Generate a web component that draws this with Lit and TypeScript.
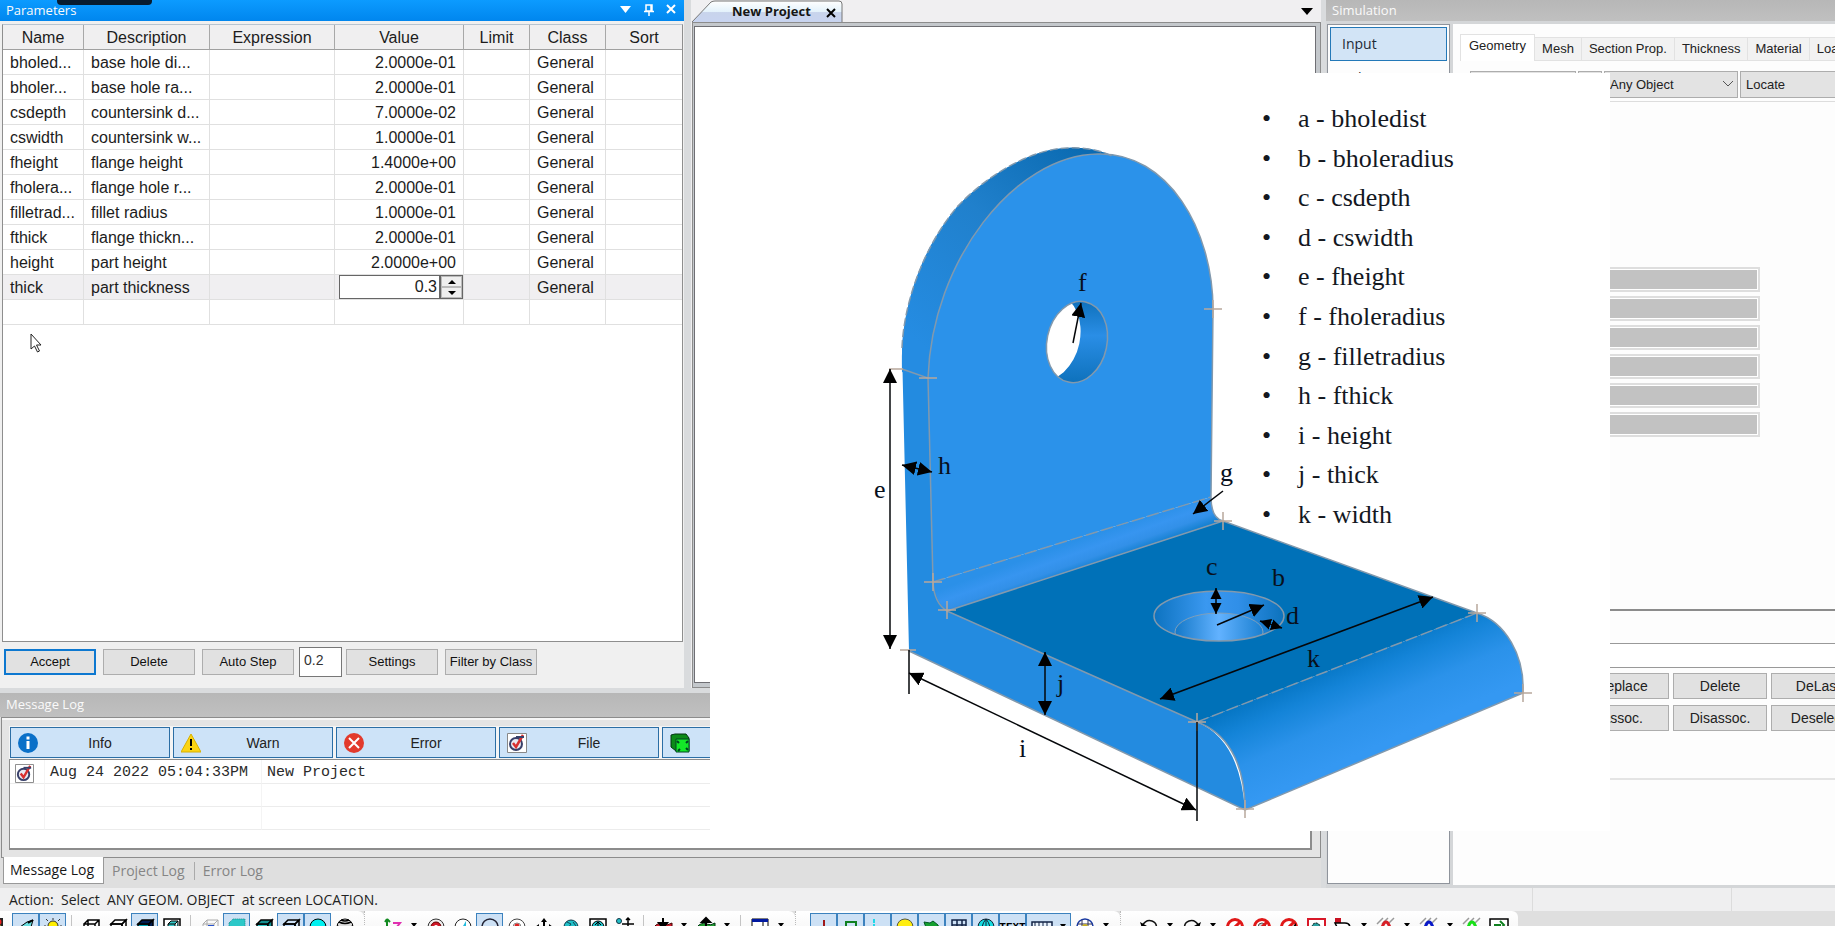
import { LitElement, html, css, svg, nothing } from "lit";
import { customElement, property } from "lit/decorators.js";
import { classMap } from "lit/directives/class-map.js";

const parameters = [
  ["bholed...", "base hole di...", "2.0000e-01"],
  ["bholer...", "base hole ra...", "2.0000e-01"],
  ["csdepth", "countersink d...", "7.0000e-02"],
  ["cswidth", "countersink w...", "1.0000e-01"],
  ["fheight", "flange height", "1.4000e+00"],
  ["fholera...", "flange hole r...", "2.0000e-01"],
  ["filletrad...", "fillet radius", "1.0000e-01"],
  ["fthick", "flange thickn...", "2.0000e-01"],
  ["height", "part height", "2.0000e+00"],
];

const legend = [
  "a - bholedist", "b - bholeradius", "c - csdepth", "d - cswidth", "e - fheight", "f - fholeradius",
  "g - filletradius", "h - fthick", "i - height", "j - thick", "k - width",
];

const cube = (front: string, side: string) => svg`
  <path d="M2 6h11v11H2z" fill=${front} stroke="#000" stroke-width="1.5"/>
  <path d="M2 6l4-4h11l-4 4z" fill=${side} stroke="#000" stroke-width="1.5"/>
  <path d="M17 2v11l-4 4V6z" fill=${side} stroke="#000" stroke-width="1.5"/>`;
const noEntry = (extra: unknown) => svg`
  <circle cx="9" cy="9" r="7.5" fill="#fff" stroke="#e01818" stroke-width="3"/>${extra}
  <path d="M4 14L14 4" stroke="#e01818" stroke-width="3"/>`;
const curve = (color: string) => svg`
  <path d="M0 6l6-6M5 6l6-6M12 5l5-5" stroke="#9a9a9a" stroke-width="1.5"/>
  <path d="M1 14c5-1 4-10 8-10s3 9 8 10" fill="none" stroke=${color} stroke-width="3"/>`;

const glyphs: Record<string, unknown> = {
  traffic: svg`<path d="M4 0h9v18H4z" fill="#222"/><circle cx="8.500" cy="4" r="3" fill="#e22"/><circle cx="8.500" cy="10" r="3" fill="#fd2"/>`,
  plane: svg`<path d="M3 9l7-5 6-2-2 7-4 5z" fill="#6adfe0" stroke="#000"/><path d="M0 9h9M11 5l5-3" stroke="#000" stroke-width="2"/>`,
  bulb: svg`<circle cx="9" cy="8" r="5" fill="#ffee00" stroke="#333"/><path d="M9 0v2M2 1l2 2M16 1l-2 2M0 8h2M16 8h2M6 13h6v4H6z" stroke="#333" fill="#999"/>`,
  wire: svg`<path d="M2 6h11v11H2zM6 2h11v11H6zM2 6l4-4M13 6l4-4M2 17l4-4M13 17l4-4" fill="none" stroke="#000" stroke-width="1.500"/>`,
  hollow: cube("none", "none"),
  dark: cube("#00a6b8", "#001c50"),
  nested: svg`<path d="M1 1h16v16H1z" fill="#fff" stroke="#000" stroke-width="1.500"/><path d="M5 6h7v7H5zM5 6l3-3h7l-3 3M15 3v7l-3 3" fill="#36c8c8" stroke="#000"/>`,
  faded: svg`<path d="M2 6h11v11H2zM6 2h11v11H6zM2 6l4-4M13 6l4-4" fill="none" stroke="#aaa"/><path d="M7 7h6v5H7z" fill="#2854d0"/>`,
  cyan: svg`<path d="M1 5l4-4h12v12l-4 4H1z" fill="#2cc8c8" stroke="#158888" stroke-dasharray="1 1"/>`,
  teal: cube("#2cc8c8", "#149090"),
  blue: cube("#bcd8f8", "none"),
  ball: svg`<circle cx="9" cy="9" r="8" fill="#00f0f0" stroke="#000"/>`,
  globe: svg`<circle cx="9" cy="9" r="8" fill="#ddd" stroke="#000"/><path d="M3 4q6 3 12 0M1 8q8 4 16 0M3 14q6-3 12 0M5 2q4 2 8 0" fill="none" stroke="#000" stroke-width="1.500"/>`,
  zoomz: svg`<path d="M3 1v15M3 1l-2 3M3 1l3 3" stroke="#128a20" stroke-width="2"/><path d="M9 5h7l-7 9h7" fill="none" stroke="#e030b0" stroke-width="2"/>`,
  target: svg`<circle cx="9" cy="9" r="8" fill="#eee" stroke="#333"/><circle cx="9" cy="9" r="5" fill="#d01828" stroke="#600"/><circle cx="9" cy="9" r="2" fill="#fff"/>`,
  dial: svg`<circle cx="9" cy="9" r="8" fill="#fff" stroke="#222"/><path d="M12 3v10l-6 0z" fill="#2bd"/>`,
  ring: svg`<circle cx="9" cy="9" r="8" fill="none" stroke="#223" stroke-width="1.500"/>`,
  dot: svg`<circle cx="9" cy="9" r="8" fill="#fff" stroke="#444"/><circle cx="9" cy="9" r="4" fill="#fff" stroke="#888"/><circle cx="9" cy="8" r="2.500" fill="#d22"/>`,
  move: svg`<path d="M9 0l3 4H6zM0 9l4-3v6zM18 9l-4-3v6zM9 18l3-4H6z"/><path d="M9 2v14M2 9h14" stroke="#000" stroke-width="2"/>`,
  earth: svg`<circle cx="9" cy="9" r="7" fill="#20c0c8" stroke="#134"/><path d="M5 4l4 2-3 4M11 4l3 4-3 3" stroke="#145" fill="none"/>`,
  fit: svg`<path d="M1 1h16v16H1z" fill="#fff" stroke="#000" stroke-width="1.500"/><circle cx="9" cy="9" r="6" fill="#20c0c8" stroke="#000"/><path d="M9 4v9M6 7l3-3 3 3" stroke="#000" fill="none"/>`,
  pan: svg`<circle cx="3" cy="3" r="2.500" fill="#20c0c8" stroke="#134"/><path d="M12 0v12M6 6h12M10 2l2-2 2 2M5 11l3 3" stroke="#000" stroke-width="1.500" fill="none"/>`,
  down: svg`<path d="M0 9q4-5 9-3t9-1v8q-9 5-18 2z" fill="#d41c2c" stroke="#400"/><path d="M9 0v7M5 5h8l-4 5z" stroke="#000" stroke-width="2"/>`,
  up: svg`<path d="M0 9q4-5 9-3t9-1v8q-9 5-18 2z" fill="#1fa030" stroke="#031"/><path d="M9 10V3M5 4h8L9 0z" stroke="#000" stroke-width="2"/>`,
  win: svg`<path d="M1 1h16v16H1z" fill="#fff" stroke="#000"/><path d="M1 1h16v3H1z" fill="#0018a0"/><path d="M12 4v13" stroke="#000"/>`,
  plus: svg`<path d="M9 2v16M1 9h16" stroke="#a01818" stroke-width="2"/>`,
  square: svg`<path d="M4 4h10v12H4z" fill="none" stroke="#108020" stroke-width="2"/>`,
  corner: svg`<path d="M5 1v14h12" fill="none" stroke="#20d8e8" stroke-width="2" stroke-dasharray="4 1"/>`,
  yellow: svg`<circle cx="9" cy="9" r="8" fill="#ffee10" stroke="#554"/>`,
  terrain: svg`<path d="M1 4l6 1 3-2 5 4 2 8-8-2-4 2z" fill="#15a030" stroke="#052"/>`,
  grid: svg`<path d="M2 2h14v14H2zM2 7h14M2 12h14M7 2v14M12 2v14" fill="none" stroke="#124" stroke-width="1.500"/>`,
  beach: svg`<circle cx="9" cy="9" r="8" fill="#16dbe0" stroke="#123"/><path d="M9 1v16M1 9h16M9 1q-6 7-3 15M9 1q6 7 3 15" fill="none" stroke="#123"/>`,
  ruler: svg`<path d="M0 4h20v9H0z" fill="#e8f2fc" stroke="#124" stroke-width="1.500"/><path d="M3 4v4M7 4v4M11 4v4M15 4v4" stroke="#124"/>`,
  web: svg`<circle cx="9" cy="9" r="8" fill="#fff" stroke="#1838a0" stroke-width="1.500"/><path d="M2 6h14M2 12h14M6 2v14M12 2v14" stroke="#335" /><circle cx="9" cy="9" r="3" fill="#c8b020"/>`,
  undo: svg`<path d="M2 8q4-7 10-5t4 10" fill="none" stroke="#111" stroke-width="1.500"/><path d="M0 4l2 6 5-2z"/>`,
  redo: svg`<path d="M16 8q-4-7-10-5t-4 10" fill="none" stroke="#111" stroke-width="1.500"/><path d="M18 4l-2 6-5-2z"/>`,
  no1: noEntry(nothing),
  no2: noEntry(svg`<circle cx="9" cy="9" r="4" fill="#ccc" stroke="#555"/>`),
  no3: noEntry(svg`<path d="M8 14L16 5v9z"/>`),
  frame: svg`<path d="M1 1h17v16H1z" fill="#fff" stroke="#d81828" stroke-width="2"/><circle cx="9" cy="9" r="4" fill="#28a0a0" stroke="#000" stroke-dasharray="2 1"/>`,
  hand: svg`<path d="M1 0h6v5H1z" fill="#c81020"/><path d="M1 5h10q5 0 5 5t-5 5H6z" fill="#fff" stroke="#000" stroke-width="1.500"/>`,
  cred: curve("#d82028"),
  cblue: curve("#0818c8"),
  cgreen: curve("#18e018"),
  exit: svg`<path d="M0 1h18v16H0z" fill="#fff" stroke="#000" stroke-width="1.500"/><path d="M5 13V7h6M10 3l4 4-4 4" fill="none" stroke="#108020" stroke-width="2"/>`,
};

const groupA = ["traffic", "*plane", "*bulb", "|", "wire", "hollow", "*dark", "nested", "|", "faded", "*cyan", "teal", "*blue", "*ball", "globe"];
const groupB = ["zoomz", "v", "target", "dial", "*ring", "dot", "move", "earth", "fit", "pan", "|", "down", "v", "up", "v", "|", "win", "v"];
const groupC = ["plus", "square", "corner", "yellow", "terrain", "grid", "beach"];
const groupD = ["undo", "v", "redo", "v", "no1", "no2", "no3", "frame", "hand", "v", "cred", "v", "cblue", "v", "cgreen", "exit"];

@customElement("title-bar")
class TitleBar extends LitElement {
  @property() heading = "";
  @property({ type: Boolean }) active = false;

  static styles = css`
    :host { display: block; }
    .bar {
      display: flex; align-items: center; justify-content: space-between; height: 100%; box-sizing: border-box;
      padding: 0 8px 2px 6px; background: linear-gradient(#b7b7b7, #c0c0c0); color: #fafafa;
      font: 13px/18px "Open Sans", "Noto Sans", sans-serif;
    }
    .active { background: linear-gradient(#0c9bff, #0086ee); }
    .tools { display: flex; gap: 12px; }
    button { border: 0; padding: 0; background: none; display: flex; }
  `;

  render() {
    return html`<div class=${classMap({ bar: true, active: this.active })}>
      <span>${this.heading}</span>
      ${this.active ? html`<span class="tools">
        <button aria-label="Menu"><svg width="12" height="10"><path d="M0 2h11L5.500 9z" fill="#fff"/></svg></button>
        <button aria-label="Pin"><svg width="10" height="12"><path d="M2 1h6v6H2zM0 7.500h10M5 7v5M7 1v6" fill="none" stroke="#fff" stroke-width="1.500"/></svg></button>
        <button aria-label="Close"><svg width="10" height="10"><path d="M1 1l8 8M9 1l-8 8" stroke="#fff" stroke-width="2"/></svg></button>
      </span>` : nothing}
    </div>`;
  }
}

@customElement("parameters-panel")
class ParametersPanel extends LitElement {
  static styles = css`
    :host { display: flex; flex-direction: column; min-height: 0; background: #f0f0f0; font: 16px/22px "Liberation Sans", Arial, sans-serif; color: #1c1c1c; }
    title-bar { height: 21px; }
    .sheet { flex: 1; margin: 3px 1px 0 2px; background: #fff; border: 1px solid #8e8e8e; border-top-color: #b8c4d0; overflow: hidden; }
    table { width: 100%; border-collapse: separate; border-spacing: 0; table-layout: fixed; }
    th { font-weight: 400; height: 25px; padding: 2px 0 0; background: #f0eff0; border-right: 1px solid #a8a8a8; border-bottom: 1px solid #a0a0a0; box-sizing: border-box; }
    td { height: 25px; padding: 2px 7px 0; border-right: 1px solid #e0e0e0; border-bottom: 1px solid #e0e0e0; box-sizing: border-box; white-space: nowrap; overflow: hidden; }
    th:last-child, td:last-child { border-right: 0; }
    .num { text-align: right; }
    .edit { padding: 0 0 0 4px; }
    .current td { background: #f0eff1; }
    .stepper { display: flex; height: 24px; box-sizing: border-box; border: 1px solid #666; background: #fff; }
    .stepper input { flex: 1; min-width: 0; border: 0; border-right: 2px solid #666; padding: 0 2px; text-align: right; font: inherit; color: inherit; outline: 0; }
    .arrows { display: flex; flex-direction: column; width: 21px; background: #ececec; }
    .arrows button { flex: 1; display: flex; align-items: center; justify-content: center; padding: 0; border: 1px solid #bbb; background: #efefef; }
    .c1 { width: 81px } .c2 { width: 126px } .c3 { width: 125px } .c4 { width: 129px } .c5 { width: 66px } .c6 { width: 76px }
    .actions { display: flex; align-items: center; gap: 7px; height: 46px; box-sizing: border-box; padding: 3px 4px 9px; }
    .actions button { width: 92px; height: 26px; padding: 0; border: 1px solid #adadad; background: #e1e1e1; font: 13px/20px "Liberation Sans", Arial, sans-serif; color: #111; white-space: nowrap; }
    .actions .default { border: 2px solid #0d78d0; }
    .actions input { width: 43px; height: 30px; margin: 0 -3px 0 -2px; box-sizing: border-box; border: 1px solid #777; background: #fff; padding: 0 4px 5px; font: 14px/20px "Liberation Sans", Arial, sans-serif; color: #333; }
  `;

  render() {
    return html`
      <title-bar heading="Parameters" active></title-bar>
      <div class="sheet">
        <table>
          <colgroup><col class="c1"><col class="c2"><col class="c3"><col class="c4"><col class="c5"><col class="c6"><col></colgroup>
          <thead><tr>${["Name", "Description", "Expression", "Value", "Limit", "Class", "Sort"].map((h) => html`<th>${h}</th>`)}</tr></thead>
          <tbody>
            ${parameters.map(([name, text, value]) => html`<tr>
              <td>${name}</td><td>${text}</td><td></td><td class="num">${value}</td><td></td><td>General</td><td></td>
            </tr>`)}
            <tr class="current">
              <td>thick</td><td>part thickness</td><td></td>
              <td class="edit"><div class="stepper">
                <input aria-label="Value" value="0.3">
                <span class="arrows">
                  <button aria-label="Increase"><svg width="8" height="4"><path d="M0 4h8L4 0z"/></svg></button>
                  <button aria-label="Decrease"><svg width="8" height="4"><path d="M0 0h8L4 4z"/></svg></button>
                </span>
              </div></td>
              <td></td><td>General</td><td></td>
            </tr>
            <tr><td></td><td></td><td></td><td></td><td></td><td></td><td></td></tr>
          </tbody>
        </table>
      </div>
      <div class="actions">
        <button class="default">Accept</button><button>Delete</button><button>Auto Step</button>
        <input aria-label="Step" value="0.2">
        <button>Settings</button><button>Filter by Class</button>
      </div>`;
  }
}

@customElement("project-view")
class ProjectView extends LitElement {
  static styles = css`
    :host { display: flex; flex-direction: column; background: #f0eff1; }
    .strip { display: flex; justify-content: space-between; align-items: center; height: 22px; padding-right: 8px; }
    .tab { position: relative; width: 152px; height: 22px; }
    .tab svg { display: block; }
    .label { position: absolute; inset: 0; display: flex; align-items: center; justify-content: space-between; padding: 0 7px 1px 41px; font: bold 13px/20px "Open Sans", "Noto Sans", sans-serif; color: #161616; }
    .label a { color: inherit; text-decoration: none; white-space: nowrap; }
    button { border: 0; padding: 0; background: none; display: flex; }
    .label button { margin-top: 5px; }
    .canvas { flex: 1; margin: 0 0 0 1px; border: 3px solid #c4c8cc; border-width: 4px 5px 5px 2px; outline: 1px solid #8c8c8c; outline-offset: -1px; background: #fff; box-shadow: inset 0 0 0 1px #6f6f74; }
  `;

  render() {
    return html`
      <div class="strip">
        <div class="tab">
          <svg width="152" height="22">
            <defs><linearGradient id="t" x2="0" y2="1"><stop offset="0" stop-color="#fff"/><stop offset=".5" stop-color="#e4f2fb"/><stop offset=".55" stop-color="#c8d4ec"/><stop offset="1" stop-color="#c8d4f0"/></linearGradient></defs>
            <path d="M1 22L20 2q2-1 4-1h124q3 0 3 3v18" fill="url(#t)" stroke="#777"/>
          </svg>
          <span class="label"><a href="#">New Project</a>
            <button aria-label="Close"><svg width="10" height="10"><path d="M1 1l8 8M9 1l-8 8" stroke="#000" stroke-width="2"/></svg></button></span>
        </div>
        <button aria-label="Tabs"><svg width="12" height="7"><path d="M0 0h12L6 7z"/></svg></button>
      </div>
      <div class="canvas"></div>`;
  }
}

const fileIcon = svg`<path d="M.500.500h19v19H.500z" fill="#fff" stroke="#888"/><circle cx="9" cy="11" r="6" fill="#e8e8f0" stroke="#38406a" stroke-width="2"/><path d="M6 10l3 4 7-12" fill="none" stroke="#d83030" stroke-width="2.500"/><path d="M9 4h8" stroke="#38406a" stroke-width="2"/>`;

@customElement("message-log")
class MessageLog extends LitElement {
  static styles = css`
    :host { display: flex; flex-direction: column; background: #dfdfdf; color: #1a1a1a; }
    title-bar { height: 24px; }
    .body { flex: 1; display: flex; flex-direction: column; margin: 0 0 0 1px; padding: 8px 8px 7px 7px; border: 1px solid #8c8c8c; background: #e4e4e4; box-shadow: inset 0 2px #f6f6f6; }
    .filters { display: flex; gap: 3px; padding: 1px; overflow: hidden; background: #f4f4f4; }
    .filters button { display: flex; align-items: center; width: 160px; height: 31px; flex: none; box-sizing: border-box; border: 1px solid #2b6ea5; background: #cde3f8; padding: 0 7px; font: 14px/20px "Liberation Sans", Arial, sans-serif; color: #222; }
    .filters span { flex: 1; }
    .filters svg { flex: none; }
    .list { flex: 1; border: 1px solid #8c8c8c; border-width: 1px 2px 2px 1px; background: #fff; }
    table { width: 100%; border-spacing: 0; table-layout: fixed; font: 15px/20px "Liberation Mono", monospace; color: #2a2a2a; }
    td { height: 23px; box-sizing: border-box; padding: 3px 5px 0; border-bottom: 1px solid #ececec; white-space: pre; }
    td + td { border-left: 1px solid #f4f4f4; }
    td svg { display: block; }
    .k1 { width: 34px } .k2 { width: 217px }
    .tabs { display: flex; align-items: flex-start; height: 30px; padding-left: 3px; font: 14px/26px "Open Sans", "Noto Sans", sans-serif; }
    .tabs a { color: #858585; text-decoration: none; padding: 0 9px 0 8px; white-space: nowrap; }
    .tabs .on { color: #161616; background: #fff; border: 1px solid #999; border-top: 0; padding: 0 9px 0 6px; margin-top: -1px; }
    .tabs .cut { border-left: 1px solid #aaa; margin: 4px 0; line-height: 18px; }
  `;

  render() {
    const filter = (label: string, icon: unknown) => html`<button aria-label=${label}><svg width="20" height="20">${icon}</svg><span>${label}</span></button>`;
    return html`
      <title-bar heading="Message Log"></title-bar>
      <div class="body">
        <div class="filters">
          ${filter("Info", svg`<circle cx="10" cy="10" r="10" fill="#0a70c8"/><path d="M8.500 8h3v8h-3zM8.500 3.500h3v3h-3z" fill="#fff"/>`)}
          ${filter("Warn", svg`<path d="M10 1l10 18H0z" fill="#fbd414" stroke="#d8b000"/><path d="M9 6h2v7H9zM9 15h2v2H9z"/>`)}
          ${filter("Error", svg`<circle cx="10" cy="10" r="10" fill="#e23a2c"/><path d="M5 5l10 10M15 5L5 15" stroke="#fff" stroke-width="2"/>`)}
          ${filter("File", fileIcon)}
          ${filter("Geom", svg`<path d="M1 2l4-1h11l3 4v13H6l-5-4z" fill="#0b8a18" stroke="#031"/><path d="M6 6h13v13H6z" fill="#14e828" stroke="#042"/><path d="M9 10l-2-2M16 10l2-2M10 16l-2 2M16 15l2 2" stroke="#042" stroke-width="2"/>`)}
        </div>
        <div class="list">
          <table>
            <colgroup><col class="k1"><col class="k2"><col></colgroup>
            <tbody>
              <tr><td><svg width="19" height="19" viewBox="0 0 20 20">${fileIcon}</svg></td><td>Aug 24 2022 05:04:33PM</td><td>New Project</td></tr>
              <tr><td></td><td></td><td></td></tr>
              <tr><td></td><td></td><td></td></tr>
            </tbody>
          </table>
        </div>
      </div>
      <nav class="tabs"><a class="on" href="#">Message Log</a><a href="#">Project Log</a><a class="cut" href="#">Error Log</a></nav>`;
  }
}

@customElement("simulation-panel")
class SimulationPanel extends LitElement {
  static styles = css`
    :host { display: grid; grid-template: 21px minmax(0, 1fr) / 123px minmax(0, 1fr); gap: 3px 3px; padding: 0 0 3px 1px; background: #d4d6d8; font: 13px/20px "Liberation Sans", Arial, sans-serif; color: #222; overflow: hidden; }
    title-bar { grid-column: 1 / -1; margin-left: -1px; }
    .side { border: 1px solid #8f949c; background: #fdfdfd; padding: 2px; margin-bottom: 1px; display: flex; flex-direction: column; }
    .side a { color: #1e2a36; text-decoration: none; padding: 6px 11px; border: 1px solid transparent; font: 14px/20px "Open Sans", "Noto Sans", sans-serif; }
    .side .on { background: #d2e4f6; border: 1px solid #2378b8; }
    .page { display: flex; flex-direction: column; background: #fdfdfd; padding-top: 10px; overflow: hidden; }
    .tabs { display: flex; align-items: flex-end; height: 27px; padding-left: 7px; }
    .tabs button { flex: none; height: 24px; padding: 0 7px; border: 1px solid #e2e2e2; border-left-width: 0; background: #f2f2f2; font: inherit; color: inherit; }
    .tabs .on { height: 27px; padding: 0 8px 4px; background: #fff; border-left-width: 1px; border-bottom: 0; }
    .picks { display: flex; gap: 2px; padding: 10px 0 3px 17px; border-bottom: 1px solid #ddd; }
    .pick { position: relative; flex: none; width: 134px; }
    .pick.s { width: 24px } .pick.m { width: 106px }
    select { appearance: none; width: 100%; height: 27px; box-sizing: border-box; border: 1px solid #adadad; border-radius: 0; background: #e3e3e3; padding: 0 5px; font: inherit; color: inherit; }
    .pick svg { position: absolute; right: 5px; top: 10px; }
    .space { flex: 1; padding: 165px 0 0 137px; display: flex; flex-direction: column; gap: 4px; border-bottom: 2px solid #8c8c8c; overflow: hidden; }
    .space input { width: 170px; height: 25px; flex: none; box-sizing: border-box; border: 2px solid #dedede; outline: 1px solid #fff; outline-offset: -3px; background: #c2c2c2; }
    .entry { margin: 32px -4px 0 0; height: 25px; flex: none; box-sizing: border-box; border: 1px solid #999; background: #fff; }
    .cmds { display: grid; grid-template-columns: repeat(3, 94px); gap: 6px 4px; padding: 5px 0 47px 122px; border-bottom: 2px solid #e4e4e4; margin-bottom: 105px; }
    .cmds button { height: 26px; padding: 0; border: 1px solid #adadad; background: #e1e1e1; font: 14px/20px "Liberation Sans", Arial, sans-serif; color: inherit; }
  `;

  render() {
    const pick = (size: string, label: string) => html`<span class="pick ${size}">
      <select aria-label="Filter"><option>${label}</option></select>
      ${size ? nothing : html`<svg width="10" height="6"><path d="M0 0l5 5 5-5" fill="none" stroke="#555"/></svg>`}</span>`;
    return html`
      <title-bar heading="Simulation"></title-bar>
      <nav class="side"><a class="on" href="#">Input</a><a href="#">Solve</a></nav>
      <div class="page">
        <div class="tabs"><button class="on">Geometry</button>${["Mesh", "Section Prop.", "Thickness", "Material", "Loads"].map((t) => html`<button>${t}</button>`)}</div>
        <div class="picks">${pick("m", "")}${pick("s", "")}${pick("", "Any Object")}${pick("", "Locate")}</div>
        <div class="space">${[1, 2, 3, 4, 5, 6].map((n) => html`<input disabled aria-label="Field ${n}">`)}</div>
        <input class="entry" aria-label="Entry">
        <div class="cmds"><button>Replace</button><button>Delete</button><button>DeLast</button><button>Assoc.</button><button>Disassoc.</button><button>Deselect</button></div>
      </div>`;
  }
}

@customElement("bracket-figure")
class BracketFigure extends LitElement {
  static styles = css`
    :host { display: block; background: #fff; color: #14181f; font: 26px/38px "Liberation Serif", "Times New Roman", serif; }
    .frame { position: relative; width: 100%; height: 100%; }
    svg { display: block; width: 100%; height: 100%; }
    ul { position: absolute; left: 552px; top: 27px; height: 434px; margin: 0; padding: 0; list-style: none; display: flex; flex-direction: column; justify-content: space-between; }
    li { display: flex; white-space: nowrap; }
    li::before { content: "•"; width: 36px; }
    text { fill: #08101c; }
    .edge { fill: none; stroke: #8299ad; stroke-width: 1.5; }
    .dim { fill: none; stroke: #05070a; stroke-width: 1.5; }
    .mark { fill: none; stroke: #b8a89c; stroke-width: 1.5; }
  `;

  render() {
    const arrow = (x1: number, y1: number, x2: number, y2: number, both = true, small = false) => {
      const m = small ? "url(#s)" : "url(#a)";
      return svg`<line class="dim" x1=${x1} y1=${y1} x2=${x2} y2=${y2} marker-end=${m} marker-start=${both ? m : "none"}/>`;
    };
    const labels: [string, number, number][] = [
      ["f", 1078, 291], ["h", 938, 474], ["e", 874, 498], ["g", 1220, 481], ["c", 1206, 575], ["b", 1272, 586],
      ["d", 1286, 624], ["k", 1307, 667], ["j", 1057, 692], ["i", 1019, 757],
    ];
    const marks = [[1213, 309], [933, 582], [947, 610], [1223, 521], [1477, 613], [1523, 693], [1197, 722], [1245, 809]];
    return html`<div class="frame">
      <svg viewBox="710 73 900 758" preserveAspectRatio="xMinYMin meet" role="img" aria-label="Bracket">
        <defs>
          <marker id="a" viewBox="0 0 14 14" refX="14" refY="7" markerWidth="14" markerHeight="14" markerUnits="userSpaceOnUse" orient="auto-start-reverse"><path d="M0 0l14 7L0 14z"/></marker>
          <marker id="s" viewBox="0 0 14 14" refX="14" refY="7" markerWidth="11" markerHeight="12" markerUnits="userSpaceOnUse" orient="auto-start-reverse"><path d="M0 0l14 7L0 14z"/></marker>
          <linearGradient id="rim" gradientUnits="userSpaceOnUse" x1="1080" y1="148" x2="915" y2="340"><stop offset="0" stop-color="#0b6bb2"/><stop offset=".45" stop-color="#2080cc"/><stop offset="1" stop-color="#258ce2"/></linearGradient>
          <linearGradient id="fil" gradientUnits="userSpaceOnUse" x1="1078" y1="540" x2="1088" y2="568"><stop offset="0" stop-color="#2b90e8"/><stop offset=".4" stop-color="#3795f0"/><stop offset=".7" stop-color="#3290e8"/><stop offset="1" stop-color="#1480d0"/></linearGradient>
          <linearGradient id="nose" gradientUnits="userSpaceOnUse" x1="1330" y1="665" x2="1368" y2="750"><stop offset="0" stop-color="#0676c4"/><stop offset=".25" stop-color="#1484d8"/><stop offset=".6" stop-color="#2b92ea"/><stop offset="1" stop-color="#3498f2"/></linearGradient>
          <linearGradient id="bore" x2="0" y2="1"><stop offset="0" stop-color="#0a6cb4"/><stop offset=".45" stop-color="#2a8ee6"/><stop offset="1" stop-color="#0c70ba"/></linearGradient>
          <linearGradient id="sink"><stop offset="0" stop-color="#0d73c0"/><stop offset=".4" stop-color="#3a98f0"/><stop offset=".65" stop-color="#308fe8"/><stop offset="1" stop-color="#0c72bc"/></linearGradient>
          <linearGradient id="well"><stop offset="0" stop-color="#1478c8"/><stop offset=".5" stop-color="#62b2ff"/><stop offset="1" stop-color="#1a7fd0"/></linearGradient>
          <clipPath id="hole"><ellipse cx="1077" cy="342" rx="30" ry="41" transform="rotate(12 1077 342)"/></clipPath>
          <clipPath id="cone"><ellipse cx="1219" cy="616" rx="65" ry="25"/></clipPath>
        </defs>
        <path d="M902 348C904 300 925 245 957 207C985 177 1030 149 1067 148C1085 147 1100 150 1112 156L1000 400L933 582L947 611L1197 722Q1240 740 1245 810L909 651Z" fill="#238be0"/>
        <path d="M902 372C900 300 925 245 957 207C985 177 1030 149 1067 148C1085 147 1100 150 1112 156C1030 155 932 240 928 378Z" fill="url(#rim)"/>
        <path d="M928 378C932 260 1015 155 1098 154C1168 152 1213 230 1213 309L1211 497L933 582Z" fill="#2b92ea"/>
        <path d="M933 582L1211 497Q1211 518 1223 521L947 611Q936 603 933 582Z" fill="url(#fil)"/>
        <path d="M947 611L1223 521L1477 613L1197 722Z" fill="#0071b8"/>
        <path d="M1197 722L1477 613C1505 622 1525 655 1523 693L1245 810C1245 760 1225 732 1197 722Z" fill="url(#nose)"/>
        <g clip-path="url(#hole)"><path d="M1040 295h80v90h-80z" fill="url(#bore)"/><ellipse cx="1048" cy="337" rx="32" ry="44" transform="rotate(12 1048 337)" fill="#fff"/></g>
        <ellipse class="edge" cx="1077" cy="342" rx="30" ry="41" transform="rotate(12 1077 342)"/>
        <ellipse cx="1219" cy="616" rx="65" ry="25" fill="url(#sink)"/>
        <g clip-path="url(#cone)"><ellipse cx="1219" cy="632" rx="44" ry="19" fill="url(#well)" stroke="#7f9fba"/></g>
        <ellipse class="edge" cx="1219" cy="616" rx="65" ry="25"/>
        <path class="edge" d="M902 348C904 300 925 245 957 207C985 177 1030 149 1067 148C1085 147 1100 150 1112 156" stroke-dasharray="8 3"/>
        <path class="edge" d="M928 378C932 260 1015 155 1098 154C1168 152 1213 230 1213 309L1211 497Q1211 518 1223 521L1477 613C1505 622 1525 655 1523 693L1245 810L909 651"/>
        <path class="edge" d="M902 369l26 9L933 582Q934 603 947 611L1197 722C1225 732 1245 760 1245 810M947 611L1223 521"/>
        <path class="edge" d="M933 582L1211 497M1197 722L1477 613" stroke-dasharray="12 4"/>
        ${marks.map(([x, y]) => svg`<path class="mark" d="M${x - 9} ${y}h18M${x} ${y - 9}v18"/>`)}
        <path class="mark" d="M889 369h14M919 378h18M900 650h16"/>
        <path class="dim" d="M909 650v44M1197 722v99"/>
        ${arrow(890, 369, 890, 649)}${arrow(902, 465, 932, 472)}${arrow(1073, 343, 1081, 303, false)}
        ${arrow(1223, 491, 1193, 514, false)}${arrow(1216, 588, 1216, 614, true, true)}${arrow(1217, 625, 1264, 605, false)}
        ${arrow(1260, 621, 1282, 628, true, true)}${arrow(1160, 699, 1433, 597)}${arrow(1045, 652, 1045, 715)}${arrow(909, 673, 1196, 810)}
        ${labels.map(([t, x, y]) => svg`<text x=${x} y=${y}>${t}</text>`)}
      </svg>
      <ul>${legend.map((l) => html`<li>${l}</li>`)}</ul>
    </div>`;
  }
}

@customElement("tool-strip")
class ToolStrip extends LitElement {
  static styles = css`
    :host { display: flex; height: 15px; overflow: hidden; background: #dfdfdf; }
    .group { display: flex; flex: none; height: 32px; padding: 2px 6px 0 14px; background: linear-gradient(#fff, #f2f2f2); border-radius: 0 6px 0 0; border-left: 1px dotted #bbb; box-sizing: border-box; }
    .first { padding-left: 0; margin-left: -15px; border: 0; }
    button { display: flex; flex: none; justify-content: center; width: 27px; height: 28px; box-sizing: border-box; border: 0; padding: 5px 0 0; background: none; }
    .on { background: #cde1f5; border: 1px solid #3c82be; padding-top: 4px; }
    .drop { width: 16px; padding-top: 10px; }
    .wide { width: 45px; gap: 8px; }
    i { width: 1px; height: 24px; margin: 2px 5px 0; background: #c4c4c4; }
    svg { flex: none; overflow: visible; }
    .caption { font: bold 11px/16px "Liberation Mono", monospace; padding-top: 5px; }
  `;

  private tool(name: string) {
    if (name === "|") return html`<i></i>`;
    if (name === "v") return html`<button class="drop" aria-label="More"><svg width="6" height="4"><path d="M0 0h6L3 4z"/></svg></button>`;
    const on = name[0] === "*";
    const key = on ? name.slice(1) : name;
    return html`<button class=${classMap({ on })} aria-label=${key}><svg width="18" height="18">${glyphs[key]}</svg></button>`;
  }

  render() {
    return html`
      <div class="group first">${groupA.map((n) => this.tool(n))}</div>
      <div class="group">${groupB.map((n) => this.tool(n))}</div>
      <div class="group">${groupC.map((n) => this.tool("*" + n))}<button class="on caption">TEXT</button>
        <button class="on wide" aria-label="ruler"><svg width="20" height="18">${glyphs.ruler}</svg><svg width="6" height="14"><path d="M0 6h6l-3 4z"/></svg></button>
        ${this.tool("web")}${this.tool("v")}</div>
      <div class="group">${groupD.map((n) => this.tool(n))}</div>`;
  }
}

@customElement("app-root")
class AppRoot extends LitElement {
  static styles = css`
    :host { display: block; }
    .app { position: relative; display: flex; flex-direction: column; height: 100vh; overflow: hidden; background: #d9dbdd; }
    .work { flex: 1; min-height: 0; display: grid; grid-template-columns: 684px minmax(0, 1fr) 509px; grid-template-rows: minmax(0, 1fr) 195px; }
    project-view { margin-left: 7px; }
    parameters-panel, project-view { margin-bottom: 5px; }
    message-log { grid-column: 1 / 3; grid-row: 2; }
    project-view, message-log { margin-right: 5px; }
    simulation-panel { grid-column: 3; grid-row: 1 / 3; }
    .status { display: flex; height: 23px; background: #efeff0; font: 14px/24px "Open Sans", "Noto Sans", sans-serif; color: #222; white-space: pre; }
    .status span:first-child { flex: 1; padding-left: 9px; }
    .cell { width: 198px; border-left: 1px solid #dcdcdc; }
    .cell.end { width: 103px; }
    bracket-figure { position: absolute; left: 710px; top: 73px; width: 900px; height: 758px; }
    .bubble { position: absolute; left: 57px; top: 0; width: 95px; height: 5px; background: #081c30; border-radius: 0 0 4px 4px; }
    .pointer { position: absolute; left: 30px; top: 333px; }
  `;

  render() {
    return html`<div class="app">
      <div class="work">
        <parameters-panel></parameters-panel>
        <project-view></project-view>
        <simulation-panel></simulation-panel>
        <message-log></message-log>
      </div>
      <div class="status"><span>Action:  Select  ANY GEOM. OBJECT  at screen LOCATION.</span><span class="cell"></span><span class="cell end"></span></div>
      <tool-strip></tool-strip>
      <bracket-figure></bracket-figure>
      <div class="bubble"></div>
      <svg class="pointer" width="13" height="20"><path d="M1 1v15l3.500-3 3 6 2-1-3-6H11z" fill="#fff" stroke="#222"/></svg>
    </div>`;
  }
}
